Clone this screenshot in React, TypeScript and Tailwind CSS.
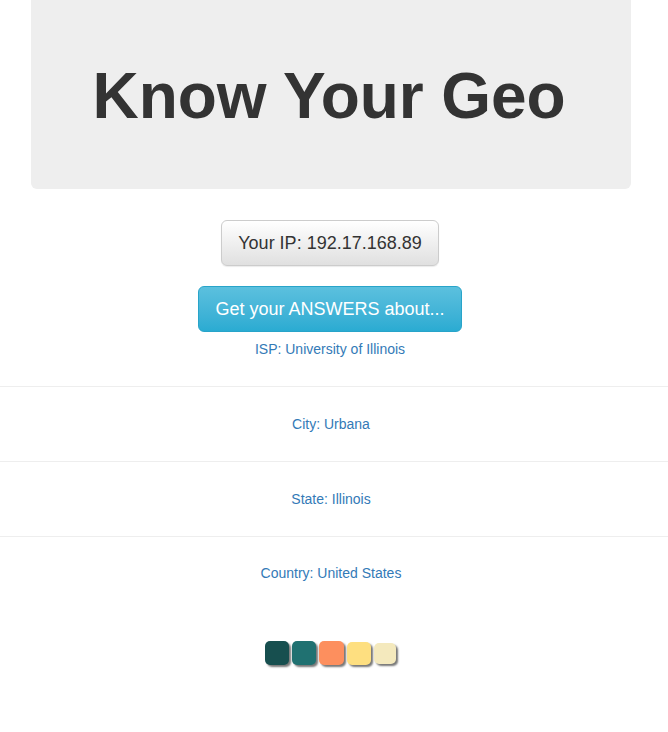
const swatches = [
  { color: "bg-[#174f4f]", size: "w-[24px] h-[24px]" },
  { color: "bg-[#207171]", size: "w-[24px] h-[24px]" },
  { color: "bg-[#fd8f5e]", size: "w-[25px] h-[24px]" },
  { color: "bg-[#fedf80]", size: "w-[24px] h-[23px]" },
  { color: "bg-[#f4e9bd]", size: "w-[22px] h-[21px]" },
];

const Row = ({ label }: { label: string }) => (
  <div className="border-t border-[#eee] w-full">
    <p className="pr-[6px] pt-[27px] pb-[27px] text-center text-[14px] leading-[20px] text-[#337ab7]">{label}</p>
  </div>
);

export default function App() {
  return (
    <div className="min-h-[732px] bg-white font-['Liberation_Sans',Arial,sans-serif] text-[#333]">
      <div className="ml-[31px] w-[600px] h-[189px] bg-[#eee] rounded-b-[6px] flex items-center justify-center">
        <h1 className="mt-[4px] mr-[4px] text-[64px] leading-[1.1] font-bold tracking-[-0.1px] text-[#333]">Know Your Geo</h1>
      </div>

      <div className="pr-[8px] flex flex-col items-center">
        <button className="mt-[31px] h-[46px] px-[16px] text-[18px] text-[#333] rounded-[6px] border border-[#ccc] bg-gradient-to-b from-white to-[#e0e0e0] shadow-[0_1px_1px_rgba(0,0,0,0.08)]">
          Your IP: 192.17.168.89
        </button>
        <button className="mt-[20px] h-[46px] w-[264px] px-[16px] text-[18px] text-white rounded-[6px] border border-[#28a4c9] bg-gradient-to-b from-[#5bc0de] to-[#2aabd2]">
          Get your ANSWERS about...
        </button>
        <p className="mt-[7px] text-[14px] leading-[20px] text-[#337ab7]">ISP: University of Illinois</p>
      </div>

      <div className="mt-[27px]">
        <Row label="City: Urbana" />
        <Row label="State: Illinois" />
        <div className="border-t border-[#eee] w-full">
          <p className="pr-[6px] pt-[26px] text-center text-[14px] leading-[20px] text-[#337ab7]">Country: United States</p>
        </div>
      </div>

      <div className="mt-[58px] pr-[8px] flex items-center justify-center gap-[3px]">
        {swatches.map((s, i) => (
          <div key={i} className={`${s.size} ${s.color} rounded-[5px] shadow-[2px_2px_2px_#777]`} />
        ))}
      </div>
    </div>
  );
}
